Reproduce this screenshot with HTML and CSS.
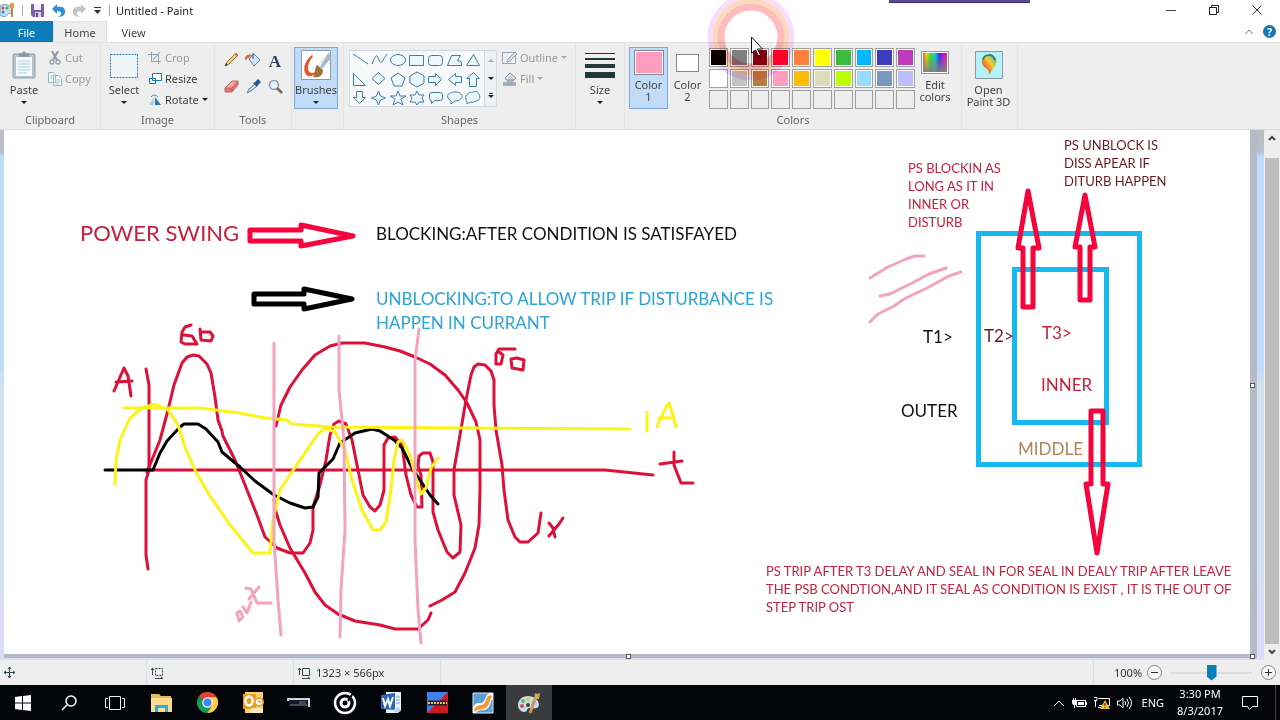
FILE: index.html
```html
<!DOCTYPE html>
<html lang="en">
<head>
  <meta charset="UTF-8">
  <title>Untitled - Paint</title>
  <link rel="stylesheet" href="styles.css">
</head>
<body>

<header class="titlebar">
  <div class="quick">
    <svg class="app-icon" width="17" height="16" viewBox="0 0 17 16"><path d="M0 4C4 1 12 3 12 8c0 4-4 3-5 5-1 2-5 2-7 0z" fill="#c3dff0" stroke="#6f9dbb"/><circle cx="3" cy="6" r="1.5" fill="#e34b3d"/><circle cx="7" cy="6" r="1.5" fill="#55b04a"/><circle cx="3" cy="10" r="1.5" fill="#3f7fd0"/><path d="M12 15V6" stroke="#c9803a" stroke-width="2"/><path d="M10 6V2l1-2 1 2 1-2 1 2v4z" fill="#e09a4d"/></svg>
    <span class="bar"></span>
    <button aria-label="Save"><svg width="13" height="13" viewBox="0 0 13 13"><path d="M0 0h13v13H2l-2-2z" fill="#7a62a8"/><path d="M3 0h7v6H3z" fill="#f3f0fa"/><path d="M4 8h6v5H4z" fill="#d9d2ea"/><path d="M5 9h2v4H5z" fill="#5a4588"/></svg></button>
    <button aria-label="Undo"><svg width="13" height="13" viewBox="0 0 13 13"><path d="M5 0v3c5-1 9 1 8 6-1 3-4 4-7 4 4-2 5-6-1-6v3L0 5z" fill="#2f8fd6"/></svg></button>
    <button aria-label="Redo"><svg width="13" height="13" viewBox="0 0 13 13"><path d="M8 0v3C3 2-1 4 0 9c1 3 4 4 7 4-4-2-5-6 1-6v3l5-5z" fill="#bcc3cb"/></svg></button>
    <button aria-label="Customize Quick Access Toolbar"><svg width="7" height="7" viewBox="0 0 7 7"><path d="M0 0h7v1H0zM0 3h7L3.500 7z" fill="#333"/></svg></button>
    <span class="bar"></span>
  </div>
  <h1>Untitled - Paint</h1>
  <div class="window-buttons">
    <button aria-label="Minimize"><svg width="10" height="10" viewBox="0 0 10 10"><path d="M0 5.500h10" stroke="#444"/></svg></button>
    <button aria-label="Restore"><svg width="10" height="10" viewBox="0 0 10 10" fill="none" stroke="#222"><path d="M.5 2.500h7v7h-7zM2.500 2.500v-2h7v7h-2"/></svg></button>
    <button aria-label="Close"><svg width="10" height="10" viewBox="0 0 10 10"><path d="M.5.5l9 9M9.500.5l-9 9" stroke="#333"/></svg></button>
  </div>
  <span class="call-strip"></span>
</header>

<nav class="tabs">
  <button class="tab file">File</button>
  <button class="tab active">Home</button>
  <button class="tab">View</button>
  <div class="tab-right">
    <button aria-label="Collapse the Ribbon"><svg width="8" height="6" viewBox="0 0 8 6"><path d="M.5 5L4 1l3.500 4" fill="none" stroke="#777"/></svg></button>
    <button class="help" aria-label="Help">?</button>
  </div>
</nav>

<section class="ribbon">
  <div class="group clipboard">
    <div class="group-body">
      <button class="big">
        <svg width="24" height="28" viewBox="0 0 24 28"><rect x="1" y="3" width="22" height="24" rx="1" fill="#b4c2cc" stroke="#93a3b0"/><path d="M4 6h16v19H4z" fill="#f4f9fb"/><path d="M6 10h12M6 13h12M6 16h12M6 19h12M6 22h9" stroke="#a9d0dd"/><path d="M7 2h3l2-2 2 2h3v4H7z" fill="#8c9ba8"/></svg>
        <span>Paste</span><i class="drop"></i>
      </button>
      <div class="stack">
        <button class="small off"><svg width="14" height="14" viewBox="0 0 14 14"><path d="M4 0l5 9M10 0L5 9" stroke="#8d98a3" stroke-width="2"/><circle cx="4" cy="11" r="2" fill="none" stroke="#9aa5af" stroke-width="1.500"/><circle cx="10" cy="11" r="2" fill="none" stroke="#9aa5af" stroke-width="1.500"/></svg>Cut</button>
        <button class="small off"><svg width="14" height="14" viewBox="0 0 14 14" fill="#f5fafc" stroke="#9eb4c2"><path d="M.5.5h5l2 2v8h-7zM5.500 3.500h5l3 3v7h-8z"/><path d="M2 4h3M2 6h2M7 8h5M7 10h5M7 12h4" stroke="#a5cbd9"/></svg>Copy</button>
      </div>
    </div>
    <div class="group-label">Clipboard</div>
  </div>

  <div class="group image">
    <div class="group-body">
      <button class="big">
        <svg width="30" height="28" viewBox="0 0 30 28"><rect x="1.500" y="3.500" width="27" height="23" fill="#eef6fa" stroke="#2b7cab" stroke-dasharray="2 1"/></svg>
        <span>Select</span><i class="drop"></i>
      </button>
      <div class="stack">
        <button class="small off"><svg width="14" height="14" viewBox="0 0 14 14" fill="none" stroke="#91a1b3"><path d="M3.500 1v9.500H13M0 3.500h10.500V13M12 1L5 9"/></svg>Crop</button>
        <button class="small"><svg width="14" height="14" viewBox="0 0 14 14" fill="#fff" stroke="#1979ad"><path d="M4.500 1.500h9v7h-9zM1.500 6.500h6v5h-6z"/></svg>Resize</button>
        <button class="small"><svg width="14" height="14" viewBox="0 0 14 14"><path d="M1 12l5-8v8z" fill="#b9cad8"/><path d="M7 12V4l6 8z" fill="#2279ac"/><path d="M3 4q3-4 7 0" fill="none" stroke="#4e8db5"/></svg>Rotate<i class="drop"></i></button>
      </div>
    </div>
    <div class="group-label">Image</div>
  </div>

  <div class="group tools">
    <div class="group-body tool-grid">
      <button aria-label="Pencil"><svg width="15" height="15" viewBox="0 0 15 15"><path d="M1 14l2-4 9-9 2 2-9 9z" fill="#f6ca78" stroke="#a9793f"/><path d="M1 14l1-3 2 2z" fill="#333"/><path d="M11 1l3 3-1 1-3-3z" fill="#dc7b6c"/></svg></button>
      <button aria-label="Fill with color"><svg width="16" height="15" viewBox="0 0 16 15"><path d="M4 7l5-5 6 6-6 6z" fill="#d6e5f2" stroke="#5c82a8"/><path d="M8 7V1" stroke="#5c82a8" stroke-width="1.500"/><path d="M4 6c2-3 4-2 5-2-2-2-6-2-8 0-2 2-1 4 0 4 1-1 1-2 3-2z" fill="#e8673c"/></svg></button>
      <button aria-label="Text" class="letter">A</button>
      <button aria-label="Eraser"><svg width="15" height="15" viewBox="0 0 15 15"><path d="M1 9l7-7h6l-6 8z" fill="#f3a79d" stroke="#c5695f"/><path d="M1 9h7v4H1zM8 9l6-7v4l-6 7z" fill="#dd7a70" stroke="#c5695f"/></svg></button>
      <button aria-label="Color picker"><svg width="15" height="15" viewBox="0 0 15 15"><path d="M1 14l2-4 6-5 2 2-6 5z" fill="#c8dfef" stroke="#5b7d9a"/><path d="M7 4l4 4 1-2 3-3-3-3-3 3z" fill="#245b8e"/></svg></button>
      <button aria-label="Magnifier"><svg width="15" height="15" viewBox="0 0 15 15"><circle cx="6" cy="6" r="4.500" fill="#e4f1fb" stroke="#8b9bab" stroke-width="1.500"/><path d="M9 9l5 5" stroke="#7d6350" stroke-width="2.500"/></svg></button>
    </div>
    <div class="group-label">Tools</div>
  </div>

  <div class="group brushes">
    <div class="group-body">
      <button class="big selected">
        <svg width="30" height="30" viewBox="0 0 30 30"><path d="M.5.5h29v29H.5z" fill="#fff" stroke="#8d9bab"/><path d="M11 5C-1 14 2 31 13 25c4-2 5-4 4-6-3 5-10 6-10-1 0-5 3-9 5-12z" fill="#e9552a"/><path d="M28 2l2 6-9 11-4-4z" fill="#a9b9c9"/><path d="M28 2L17 15l2 2z" fill="#e8eff5"/><path d="M16 15l6 5c0 7-6 8-10 7 3-3 1-9 4-12z" fill="#a0703f"/></svg>
        <span>Brushes</span><i class="drop"></i>
      </button>
    </div>
  </div>

  <div class="group shapes">
    <div class="group-body">
      <div class="gallery">
        <svg width="134" height="56" viewBox="0 0 134 56" fill="#edf8fc" stroke="#3f7fa3">
          <path d="M3 3l15 10" fill="none"/><path d="M22 13c4-10 5-10 7-4s3 1 8-6" fill="none"/><ellipse cx="48" cy="9" rx="7.500" ry="5.500"/><path d="M59.500 4.500h14v10h-14z"/><rect x="78.500" y="4.500" width="14" height="10" rx="3"/><path d="M97.500 14.500l4-10h9l-3 5 4 1v4z"/><path d="M123.500 3.500l6 11h-13z"/>
          <path d="M3.500 22.500v12h12z"/><path d="M28.500 21.500l6.500 6-6.500 6-6.500-6z"/><path d="M48 22l7 5-3 8h-8l-3-8z"/><path d="M67 21l7 4v7l-7 4-7-4v-7z"/><path d="M78.500 25.500h7v-3l6 6-6 6v-3h-7z"/><path d="M111.500 25.500h-6v-3l-7 6 7 6v-3h6z"/><path d="M123.500 21.500l6 6h-3v8h-7v-8h-3z"/>
          <path d="M6.500 40.500h6v6h3l-6 6-6-6h3z"/><path d="M28.500 40l2 5 5 2-5 2-2 5-2-5-5-2 5-2z"/><path d="M48 40l2 5h6l-5 3 2 6-5-3-5 3 2-6-5-3h6z"/><path d="M67 40l2 4h5l-2 3 2 4h-5l-2 3-2-3h-5l2-4-2-3h5z"/><path d="M81.500 41.500h9q2 0 2 2v4q0 2-2 2h-6l-3 3v-3q-2 0-2-2v-4q0-2 2-2z"/><path d="M101 50c-8-6 0-9 4-9 10 0 9 9 0 9l-4 3z"/><path d="M118 43c1-3 4-1 5-2 4-2 6 1 6 3 2 2 0 6-3 6-3 2-5 1-6 1l-3 2c1-3-2-3-1-5-1-2 0-4 2-5z"/>
        </svg>
        <div class="gallery-scroll">
          <button aria-label="Scroll shapes up"><i class="drop up"></i></button>
          <button aria-label="Scroll shapes down"><i class="drop"></i></button>
          <button aria-label="More shapes"><i class="drop more"></i></button>
        </div>
      </div>
      <div class="stack">
        <button class="small off"><svg width="15" height="14" viewBox="0 0 15 14" fill="#eef2f5" stroke="#98a6b8"><path d="M.5 1.500h13v11H.5z"/><path d="M5 11l1-3 7-7 2 2-7 7z" fill="#d4dae2"/></svg>Outline<i class="drop"></i></button>
        <button class="small off"><svg width="15" height="14" viewBox="0 0 15 14"><path d="M1 10h13v4H1z" fill="#a7adb6"/><path d="M3 6l5-5 6 5-6 6z" fill="#d8dfe8" stroke="#8496aa"/><path d="M3 7h10l-5 4z" fill="#9eb0c5"/></svg>Fill<i class="drop"></i></button>
      </div>
    </div>
    <div class="group-label">Shapes</div>
  </div>

  <div class="group size">
    <div class="group-body">
      <button class="big">
        <svg width="30" height="28" viewBox="0 0 30 28" fill="#1f3b3b"><path d="M0 2h30v1H0zM0 7h30v2H0zM0 13h30v4H0zM0 21h30v6H0z"/></svg>
        <span>Size</span><i class="drop"></i>
      </button>
    </div>
  </div>

  <div class="group colors">
    <div class="group-body">
      <button class="big selected color-slot"><i class="chip pink"></i><span>Color<br>1</span></button>
      <button class="big color-slot"><i class="chip white"></i><span>Color<br>2</span></button>
      <div class="palette">
        <button aria-label="Black"></button><button aria-label="Gray-50%"></button><button aria-label="Dark red"></button><button aria-label="Red"></button><button aria-label="Orange"></button><button aria-label="Yellow"></button><button aria-label="Green"></button><button aria-label="Turquoise"></button><button aria-label="Indigo"></button><button aria-label="Purple"></button>
        <button aria-label="White"></button><button aria-label="Gray-25%"></button><button aria-label="Brown"></button><button aria-label="Rose"></button><button aria-label="Gold"></button><button aria-label="Light yellow"></button><button aria-label="Lime"></button><button aria-label="Light turquoise"></button><button aria-label="Blue-gray"></button><button aria-label="Lavender"></button>
        <button disabled></button><button disabled></button><button disabled></button><button disabled></button><button disabled></button><button disabled></button><button disabled></button><button disabled></button><button disabled></button><button disabled></button>
      </div>
      <button class="big edit"><i class="spectrum"></i><span>Edit<br>colors</span></button>
    </div>
    <div class="group-label">Colors</div>
  </div>

  <div class="group paint3d">
    <div class="group-body">
      <button class="big">
        <svg width="28" height="28" viewBox="0 0 28 28">
          <defs><linearGradient id="drop3d" x1="0" y1="1" x2="1" y2="0"><stop offset="0" stop-color="#b03aa5"/><stop offset=".3" stop-color="#ea6a2e"/><stop offset=".6" stop-color="#f7cd31"/><stop offset="1" stop-color="#23a8b5"/></linearGradient></defs>
          <path d="M.5.5h27v27H.5z" fill="#b5f3f8" stroke="#8c98a5"/><path d="M14 4c6 0 9 5 7 9-1 4-5 5-6 11-1-2-1-4-3-6-3-2-5-4-5-7 0-4 3-7 7-7z" fill="url(#drop3d)"/><path d="M8 9c1-6 10-7 12 0" fill="none" stroke="#27867e" stroke-width="2"/></svg>
        <span>Open<br>Paint 3D</span>
      </button>
    </div>
  </div>
</section>

<main class="workspace">
  <div class="sheet">
    <svg class="drawing" viewBox="4 130 1246 524">
      <!-- captions -->
      <g class="note">
        <text class="t-title crimson" x="80" y="241">POWER SWING</text>
        <text class="t-mid" x="376" y="240">BLOCKING:AFTER CONDITION IS SATISFAYED</text>
        <text class="t-mid blue"><tspan x="376" y="305">UNBLOCKING:TO ALLOW TRIP IF DISTURBANCE IS</tspan><tspan x="376" y="329">HAPPEN IN CURRANT</tspan></text>
        <text class="t-small crimson"><tspan x="908" y="173">PS BLOCKIN AS</tspan><tspan x="908" y="191">LONG AS IT IN</tspan><tspan x="908" y="209">INNER OR</tspan><tspan x="908" y="227">DISTURB</tspan></text>
        <text class="t-small maroon"><tspan x="1064" y="150">PS UNBLOCK IS</tspan><tspan x="1064" y="168">DISS APEAR IF</tspan><tspan x="1064" y="186">DITURB HAPPEN</tspan></text>
        <text class="t-small crimson"><tspan x="766" y="576">PS TRIP AFTER T3 DELAY AND SEAL IN FOR SEAL IN DEALY TRIP AFTER LEAVE</tspan><tspan x="766" y="594">THE PSB CONDTION,AND IT SEAL AS CONDITION IS EXIST , IT IS THE OUT OF</tspan><tspan x="766" y="612">STEP TRIP OST</tspan></text>
      </g>

      <!-- zones -->
      <g class="zone">
        <path d="M978.500 233.500h161v231h-161z"/>
        <path d="M1014.500 269.500h92v153h-92z"/>
      </g>
      <g class="note">
        <text class="t-mid" x="923" y="343">T1&gt;</text>
        <text class="t-mid maroon" x="984" y="342">T2&gt;</text>
        <text class="t-mid crimson" x="1042" y="339">T3&gt;</text>
        <text class="t-mid crimson" x="1041" y="391">INNER</text>
        <text class="t-mid" x="901" y="417">OUTER</text>
        <text class="t-mid tan" x="1018" y="455">MIDDLE</text>
      </g>

      <!-- block arrows -->
      <g class="arrow">
        <path d="M250 230h51v-5l52 11-52 10v-5h-51z"/>
        <path d="M1023 307v-59h-5l10-57 11 57h-6v59z"/>
        <path d="M1080 300v-53h-5l10-52 10 52h-5v53z"/>
        <path d="M1091 411h12v73h5l-11 69-11-69h5z"/>
        <path class="black" d="M254 294h50v-5l48 10-48 10v-5h-50z"/>
      </g>

      <!-- freehand curves -->
      <g class="pen red">
        <path d="M146 369l3 16v85l-3 10v75l2 14"/>
        <path d="M146 470h459l48 5"/>
        <path d="M114 391l10-23 4 8 3 20M116 382l16-1"/>
        <path d="M191 325l-6 2-3 5-1 10 4 2h12l-5-8-8-1M200 329l1 11 10 1 2-5-3-4-8 0"/>
        <path d="M147 472L160 440 168 410 174 385 182 363 187 357 193 355 199 356 207 364 211 373 215 397 218 420 222 431 223 436 235 460 245 485 257 515 265 537 277 548 290 553 303 553 310 543 313 530 313 507 320 485 326 460 330 435 334 424 339 421 346 424 352 440 357 465 363 495 370 507 375 511 380 505 384 490 384 445 388 438 395 437 402 445 406 475 411 495 417 507 422 507 421 475 418 466 419 456 423 453 430 453 433 462 433 512 438 530 447 552 453 558 460 552 461 525 454 495 454 470 460 435 466 400 471 375 474 367 478 364 485 365 491 371 494 380 494 405 496 430 502 465 504 490 508 520 515 537 520 542 528 542 538 533 541 513"/>
        <path d="M276 426L281 405 290 387 302 370 315 355 330 346 342 343 365 343 385 347 400 351 415 357 430 364 445 375 458 390 467 403 476 422 480 440 480 490 479 525 475 548 465 573 455 592 442 600 430 606"/>
        <path d="M431 613L428 620 418 629 395 629 380 625 355 621 338 614 325 605 315 592 305 573 290 548 280 525 276 512 274 500"/>
        <path d="M515 349h-16l-3 5v10h5l2-9-4-3M511 359l1 9 11 2 1-10-7-2z"/>
        <path d="M549 523l4 5 2 9M563 518l-4 6-10 12"/>
        <path d="M660 464l22-3M674 452l0 13 7 18h12"/>
      </g>
      <g class="pen black">
        <path d="M105 470H153L160 453 167 441 180 427 184 424 198 424 206 429 218 442 222 452 240 467 255 481 274 495 290 503 305 508 313 507 318 497 319 473 326 466 333 459 340 443 355 433 372 429 380 431 394 440 402 448 413 470 422 483 430 495 438 504"/>
      </g>
      <g class="pen yellow">
        <path d="M124 408L200 408 240 413 265 418 287 420 291 424 330 427 470 428 630 429"/>
        <path d="M115 484L116 460 120 440 130 418 142 408 155 404 168 410 178 425 186 450 196 472 210 496 230 525 253 553 270 553 273 520 280 490 300 460 318 434 325 428 335 432 345 450 352 480 362 510 373 530 380 530 386 522 391 490 394 460 398 442 402 440 410 455 415 475 421 494 426 488 431 468 438 458"/>
        <path d="M647 412v19M657 427l9-20 3-4 3 9 4 15M659 418h15"/>
      </g>
      <g class="pen pink">
        <path d="M274 343V540L278 600 281 635"/>
        <path d="M339 336V390L344 440 345 530 341 590 340 637"/>
        <path d="M419 329L415 360V540L418 610 421 643"/>
        <path d="M246 588l5 1 6 14h14M259 587l-10 12M243 607l4 6 4-11M237 613l3-2 3 6-4 4-2-8"/>
        <path d="M870 278l18-11 18-8 9-3 9 0M880 296l10-2 22-11 17-9 17-6M870 322l8-8 16-8 10-7 25-12 20-11 12-4"/>
      </g>
    </svg>
    <i class="handle right"></i>
    <i class="handle bottom"></i>
    <i class="handle corner"></i>
  </div>
  <div class="scrollbar">
    <button aria-label="Scroll up"><svg width="8" height="6" viewBox="0 0 8 6"><path d="M1 5l3-3 3 3" fill="none" stroke="#444" stroke-width="2"/></svg></button>
    <div class="thumb"></div>
    <button aria-label="Scroll down"><svg width="8" height="6" viewBox="0 0 8 6"><path d="M1 1l3 3 3-3" fill="none" stroke="#444" stroke-width="2"/></svg></button>
  </div>
</main>

<footer class="status">
  <div class="cell"><svg width="11" height="11" viewBox="0 0 11 11" fill="none" stroke="#35484f"><path d="M5.500 0v11M0 5.500h11M4 2l1.500-2L7 2M4 9l1.500 2L7 9M2 4L0 5.500 2 7M9 4l2 1.500L9 7"/></svg></div>
  <div class="cell"><svg width="13" height="12" viewBox="0 0 13 12" fill="none" stroke="#35484f"><path d="M1.500 8V1M0 3l1.500-2L3 3M4 11.500h8M10 10l2 1.500"/><path d="M4.500 1.500h7v7h-7z" stroke-dasharray="2 1"/></svg></div>
  <div class="cell"><svg width="13" height="12" viewBox="0 0 13 12" fill="none" stroke="#35484f"><path d="M1.500 8V1M0 3l1.500-2L3 3M4 11.500h8M10 10l2 1.500M4.500 1.500h7v7h-7z"/></svg>1323 × 566px</div>
  <div class="zoom">
    <label for="zoom">100%</label>
    <button aria-label="Zoom out"><svg width="15" height="15" viewBox="0 0 15 15"><circle cx="7.500" cy="7.500" r="7" fill="#f8f8f8" stroke="#888"/><path d="M4 7.500h7" stroke="#333"/></svg></button>
    <input type="range" id="zoom" min="0" max="100" value="50">
    <button aria-label="Zoom in"><svg width="15" height="15" viewBox="0 0 15 15"><circle cx="7.500" cy="7.500" r="7" fill="#f8f8f8" stroke="#888"/><path d="M4 7.500h7M7.500 4v7" stroke="#333"/></svg></button>
  </div>
</footer>

<div class="taskbar">
  <button aria-label="Start"><svg width="16" height="16" viewBox="0 0 16 16" fill="#fff"><path d="M0 2l7-1v6.500H0zM8 1l8-1v7.500H8zM0 8.500h7V15l-7-1zM8 8.500h8V16l-8-1z"/></svg></button>
  <button aria-label="Search"><svg width="16" height="16" viewBox="0 0 16 16" fill="none" stroke="#fff" stroke-width="1.500"><circle cx="10" cy="6" r="5"/><path d="M6 10l-5 5"/></svg></button>
  <button aria-label="Task View"><svg width="20" height="16" viewBox="0 0 20 16" fill="none" stroke="#eee"><path d="M4.500 1.500h11v13h-11zM3 3.500H.5v9H3M17 3.500h2.500v9H17"/></svg></button>
  <button aria-label="File Explorer"><svg width="21" height="18" viewBox="0 0 21 18"><path d="M0 0h8l2 2h10v15H0z" fill="#e7ba58"/><path d="M0 4h21v14H0z" fill="#fbdc8b"/><path d="M4 18v-7h13v7h-3v-4H7v4z" fill="#35a9de"/></svg></button>
  <button aria-label="Chrome"><svg width="21" height="21" viewBox="0 0 20 20"><path d="M10 10L1.300 5A10 10 0 0 1 18.700 5z" fill="#db4437"/><path d="M10 10L1.300 5A10 10 0 0 0 10 20l4.300-7.500z" fill="#0f9d58"/><path d="M10 10l4.300 2.500L10 20A10 10 0 0 0 18.700 5H10z" fill="#ffcd40"/><circle cx="10" cy="10" r="5" fill="#f4f4f4"/><circle cx="10" cy="10" r="3.800" fill="#4285f4"/></svg></button>
  <button aria-label="Outlook"><svg width="21" height="21" viewBox="0 0 21 21"><path d="M2 0h18v21H2z" fill="#f9d27a"/><path d="M0 2h13v15H0z" fill="#eaa01f"/><ellipse cx="6" cy="9" rx="3.500" ry="4.500" fill="none" stroke="#fff" stroke-width="2.500"/><circle cx="16" cy="10" r="4" fill="#fff" stroke="#e8a83b" stroke-width="2"/><path d="M16 8v2h2" stroke="#b77b1a" fill="none"/><path d="M8 16h12v5H8z" fill="#fbe7b7"/></svg></button>
  <button aria-label="Device"><svg width="24" height="11" viewBox="0 0 24 11"><path d="M0 1h23v9h-2V4H0z" fill="#d5d3da"/><path d="M2 3h19v6H2z" fill="#1a1a26"/><path d="M12 4h7v3h-7z" fill="#44446a"/><path d="M3 8h17" stroke="#77778a"/></svg></button>
  <button aria-label="Groove"><svg width="24" height="24" viewBox="0 0 24 24"><circle cx="12" cy="12" r="10" fill="none" stroke="#fff" stroke-width="2.500"/><circle cx="12" cy="12" r="4" fill="none" stroke="#fff" stroke-width="3"/><path d="M15 10l5-8" stroke="#000" stroke-width="2"/></svg></button>
  <button aria-label="Word"><svg width="21" height="21" viewBox="0 0 21 21"><path d="M5 0h15v18l-3 3H5z" fill="#e9f1fb"/><path d="M15 5h4M15 8h4M15 11h4" stroke="#7aa3dd"/><path d="M0 3l14-2v17L0 17z" fill="#2b63b5"/><path d="M2 6l2 8 3-7 2 7 3-9" fill="none" stroke="#fff" stroke-width="2"/><path d="M12 18l6-3 2 4-5 2z" fill="#b8d2f0"/></svg></button>
  <button aria-label="Converter"><svg width="21" height="21" viewBox="0 0 21 21"><path d="M0 0h21v21H0z" fill="#3f80ea"/><path d="M21 0v21H0z" fill="#cf1a1f"/><path d="M1 11h19" stroke="#211f2a" stroke-width="5"/><path d="M1 11h19" stroke="#e6c458" stroke-width="2" stroke-dasharray="2 1"/></svg></button>
  <button aria-label="Editor"><svg width="22" height="22" viewBox="0 0 22 22"><path d="M1 1h20v20H1z" fill="#5d9fd8" stroke="#dcecf8"/><path d="M1 16c4-9 8-2 11-7 3-4 1-6 6-8h3v6c-3 2-2 6-5 9-4 4-9 0-12 5H1z" fill="#fff"/><path d="M2 18c4-8 8-2 11-8 2-4 2-6 5-7l2 2c-3 3-2 7-5 10-4 4-8 0-12 5z" fill="#f39a2d"/></svg></button>
  <button class="running" aria-label="Paint"><svg width="23" height="22" viewBox="0 0 23 22"><path d="M10 4C4 4 0 8 0 13c0 4 3 7 6 7 4 0 2-3 5-4 4 0 9 2 10-3 0-5-5-9-11-9z" fill="#c2deef"/><circle cx="5" cy="9" r="2" fill="#6bb660"/><circle cx="10" cy="7" r="2" fill="#e8c545"/><circle cx="4" cy="14" r="2" fill="#dd4a3f"/><circle cx="10" cy="13" r="2" fill="#3d4450"/><path d="M12 21l5-14" stroke="#d6934d" stroke-width="3"/><path d="M16 7l1-6 2 1 3-1-1 6z" fill="#d9a25f"/></svg></button>
  <div class="tray">
    <button aria-label="Show hidden icons"><svg width="12" height="8" viewBox="0 0 12 8"><path d="M1 7l5-5 5 5" fill="none" stroke="#fff"/></svg></button>
    <button aria-label="Battery"><svg width="15" height="12" viewBox="0 0 15 12"><path d="M4.500 3.500h9v6h-9z" fill="none" stroke="#fff"/><path d="M6 5h6v3H6zM14 5h1v3h-1zM0 3h5v3L4 8H1L0 6zM1 1h1v2H1zM3 1h1v2H3zM2 8h1v3H2z" fill="#fff"/></svg></button>
    <button aria-label="Network"><svg width="16" height="14" viewBox="0 0 16 14"><path d="M4.500 2.500h11v7H5M0 1.500h3v3H0M1.500 5v6M4 11.500h5" fill="none" stroke="#fff"/><path d="M11 4l5 9H6z" fill="#f2bd35"/><path d="M11 7v3M11 11v1" stroke="#222"/></svg></button>
    <button aria-label="Volume"><svg width="16" height="14" viewBox="0 0 16 14" fill="none" stroke="#fff"><path d="M.5 5v4H3l3 3V2L3 5zM8 5q1.500 2 0 4M10 3q3 4 0 8M12 1q5 6 0 12"/></svg></button>
    <button class="lang">ENG</button>
    <button class="clock">3:30 PM<br>8/3/2017</button>
    <button class="notify" aria-label="Action Center"><svg width="16" height="16" viewBox="0 0 16 16"><path d="M.5 1.500h15v10h-5l-3 3-2-3h-5z" fill="none" stroke="#fff"/></svg></button>
    <span class="peek"></span>
  </div>
</div>

<svg class="pointer halo" width="88" height="88" viewBox="0 0 88 88" fill="none">
  <circle cx="44" cy="44" r="41" stroke="#f8dcfc" stroke-width="5"/><circle cx="44" cy="44" r="36" stroke="#ffd9bb" stroke-width="5"/><circle cx="44" cy="44" r="30" stroke="#ffbcbc" stroke-width="7"/>
</svg>
<svg class="pointer" width="88" height="88" viewBox="0 0 88 88">
  <path d="M44.500 44v16l4-3 3 6 2-1-3-6h5z" fill="#fff" stroke="#111"/>
</svg>

</body>
</html>
```
FILE: styles.css
```css
* { box-sizing: border-box; }
body {
  margin: 0;
  height: 100vh;
  display: flex;
  flex-direction: column;
  position: relative;
  overflow: hidden;
  font-family: "Noto Sans", sans-serif;
  font-size: 11px;
  color: #444;
  background: #fff;
}
button {
  font: inherit;
  color: inherit;
  background: none;
  border: none;
  padding: 0;
  display: flex;
  align-items: center;
  justify-content: center;
}
svg { display: block; flex: none; }

/* title bar */
.titlebar {
  height: 21px;
  display: flex;
  align-items: center;
  padding-bottom: 1px;
  position: relative;
}
.quick { display: flex; align-items: center; gap: 8px; }
.quick .app-icon { margin-right: -3px; }
.bar { width: 1px; height: 11px; background: #aaa; }
.titlebar h1 {
  margin: 0 0 0 6px;
  font-size: 11px;
  font-weight: normal;
  color: #222;
}
.window-buttons { margin-left: auto; margin-right: 2px; display: flex; height: 18px; }
.window-buttons button { width: 43px; }
.call-strip {
  position: absolute;
  top: 0;
  right: 250px;
  width: 141px;
  height: 3px;
  background: #5c4a94;
  border-bottom: 1px solid #3c2c70;
}

/* tabs */
.tabs { display: flex; height: 21px; }
.tab { width: 53px; border: 1px solid transparent; border-bottom: none; }
.tab.active { background: #eee; border-color: #e2e2e2; width: 54px; }
.tab.file { background: #0d7dba; color: #fff; border-color: #0d7dba; }
.tab-right {
  margin-left: auto;
  display: flex;
  align-items: center;
  gap: 10px;
  padding-right: 4px;
}
.help {
  width: 13px;
  height: 13px;
  border-radius: 50%;
  background: #1377b0;
  color: #fff;
  font-weight: bold;
}

/* ribbon */
.ribbon {
  display: flex;
  height: 88px;
  background: #eee;
  border-top: 1px solid #e4e4e4;
  border-bottom: 1px solid #d8dae0;
}
.group {
  display: flex;
  flex-direction: column;
  border-right: 1px solid #e2e4e8;
  padding: 4px 0 1px;
}
.group-body { display: flex; flex: 1; align-items: flex-start; }
.group-label { text-align: center; line-height: 16px; color: #666; }
.clipboard { width: 101px; }
.image { width: 114px; }
.tools { width: 77px; }
.brushes { width: 52px; }
.shapes { width: 232px; }
.size { width: 49px; }
.colors { width: 337px; }
.paint3d { width: 56px; }
.clipboard .group-body, .shapes .group-body { padding-left: 5px; }
.image .group-body, .colors .group-body { padding-left: 4px; }
.brushes .group-body { padding-left: 2px; }
.big {
  width: 38px;
  flex-direction: column;
  justify-content: flex-start;
  padding-top: 2px;
  line-height: 12px;
  border: 1px solid transparent;
  height: 62px;
}
.big svg { height: 30px; }
.big span { margin: 4px -6px 5px; white-space: nowrap; }
.brushes .big { width: 44px; }
.size .big { width: 48px; }
.paint3d .big { width: 53px; }
.big.selected { background: #c2dcf8; border-color: #7ea9dc; }
.stack { display: flex; flex-direction: column; padding-left: 5px; }
.small {
  height: 21px;
  justify-content: flex-start;
  gap: 3px;
}
.off { color: #999; }
.drop {
  border: 3px solid transparent;
  border-top-color: #222;
  border-bottom: none;
  width: 0;
  height: 0;
}
.off .drop { border-top-color: #aaa; }
.drop.up { border-top: none; border-bottom: 3px solid #aaa; }
.drop.more { box-shadow: 0 -3px 0 -1px #444; }
.tool-grid {
  display: grid;
  grid-template-columns: repeat(3, 22px);
  grid-auto-rows: 27px;
  justify-content: center;
  align-content: start;
  padding-top: 5px;
}
.letter { font: bold 17px "Liberation Serif", serif; color: #26465f; }
.gallery {
  display: flex;
  width: 148px;
  height: 57px;
  margin-top: 3px;
  background: #f6f8fa;
  border: 1px solid #d5dae2;
}
.gallery-scroll {
  flex: 1;
  display: grid;
  grid-template-rows: repeat(3, 1fr);
  background: #eef1f4;
  border-left: 1px solid #d5dae2;
}
.color-slot { width: 39px; }
.chip { width: 30px; height: 30px; border: 1px solid #888; box-shadow: inset 0 0 0 1px #fff; }
.chip.pink { background: #ff9dc0; }
.chip.white { background: #fff; width: 23px; height: 23px; margin: 4px 0 3px; }
.palette {
  flex: 1;
  display: grid;
  grid-template-columns: repeat(10, 1fr);
  grid-auto-rows: 19px;
  gap: 2px;
  margin: 1px 0 0 2px;
}
.palette button { border: 1px solid #a0a0a0; box-shadow: inset 0 0 0 1px #fff; }
.palette button:disabled { box-shadow: none; }
.palette button:nth-child(1) { background: #0a0000; }
.palette button:nth-child(2) { background: #7f7f7f; }
.palette button:nth-child(3) { background: #880010; }
.palette button:nth-child(4) { background: #ff0030; }
.palette button:nth-child(5) { background: #ff7f3c; }
.palette button:nth-child(6) { background: #ffff00; }
.palette button:nth-child(7) { background: #3cbc3c; }
.palette button:nth-child(8) { background: #00b8ff; }
.palette button:nth-child(9) { background: #3c3cbf; }
.palette button:nth-child(10) { background: #bc3cbc; }
.palette button:nth-child(11) { background: #ffffff; }
.palette button:nth-child(12) { background: #c3c3c3; }
.palette button:nth-child(13) { background: #bc7c40; }
.palette button:nth-child(14) { background: #ff9dc0; }
.palette button:nth-child(15) { background: #ffbc00; }
.palette button:nth-child(16) { background: #dcdcb8; }
.palette button:nth-child(17) { background: #bcff00; }
.palette button:nth-child(18) { background: #98dcff; }
.palette button:nth-child(19) { background: #7898bf; }
.palette button:nth-child(20) { background: #bcbcff; }
.edit { width: 40px; margin-right: 6px; }
.spectrum {
  width: 28px;
  height: 28px;
  margin: 1px;
  border: 1px solid #8c98a5;
  box-shadow: inset 0 0 0 1px #fff;
  background: linear-gradient(transparent, #808080), linear-gradient(90deg, #f33, #fd0, #2e2, #0dd, #22f, #d0d, #f24);
}

/* drawing area */
.workspace {
  flex: 1;
  min-height: 0;
  display: flex;
  background: linear-gradient(#b9bec6 4%, #bfdcfc 5%, #bfdcfc 45%, #d3e1f3 48%, #d3e1f3 85%, #dcdcfa 90%);
}
.sheet {
  flex: 1;
  position: relative;
  margin: 0 7px 2px 4px;
  padding: 0 7px 4px 0;
  background: #b4bac6;
}
.drawing { width: 100%; height: 100%; background: #fff; }
.handle {
  position: absolute;
  width: 5px;
  height: 5px;
  background: #fff;
  border: 1px solid #555;
}
.handle.right { right: 2px; top: 48%; }
.handle.bottom { left: 50%; bottom: -1px; margin-left: -5px; }
.handle.corner { right: 2px; bottom: -1px; }
.scrollbar {
  width: 16px;
  display: flex;
  flex-direction: column;
  background: #eee;
}
.scrollbar button { height: 16px; }
.thumb { flex: 1; margin: 12px 1px 0; background: #bdbdbd; }
.note { font-family: Lato, "Noto Sans", sans-serif; fill: #111; }
.t-title { font-size: 22px; }
.t-mid { font-size: 17px; }
.t-small { font-size: 13px; }
.note .crimson { fill: #c8203e; }
.note .maroon { fill: #6b1a20; }
.note .blue { fill: #28a4d6; }
.note .tan { fill: #b08458; }
.zone { fill: none; stroke: #16b8f0; stroke-width: 5px; }
.arrow { fill: none; stroke: #f5053c; stroke-width: 5px; stroke-linejoin: round; }
.arrow .black { stroke: #000; }
.pen { fill: none; stroke-width: 3px; stroke-linejoin: round; stroke-linecap: round; }
.pen.red { stroke: #dc1038; }
.pen.black { stroke: #000; }
.pen.yellow { stroke: #fcf418; }
.pen.pink { stroke: #f2a4bf; }

/* status bar */
.status {
  display: flex;
  height: 25px;
  background: #eee;
  color: #333;
}
.status .cell {
  width: 147px;
  display: flex;
  align-items: center;
  gap: 5px;
  padding-left: 4px;
  border-right: 1px solid #dcdfe4;
}
.zoom {
  margin-left: auto;
  width: 187px;
  display: flex;
  align-items: center;
  gap: 5px;
  padding: 0 4px 0 20px;
  border-left: 1px solid #dcdfe4;
}
.zoom input {
  flex: 1;
  min-width: 0;
  margin: 0 4px;
  height: 16px;
  appearance: none;
  background: linear-gradient(#ddd, #ddd) center / 100% 2px no-repeat;
}
.zoom input::-webkit-slider-thumb {
  appearance: none;
  width: 10px;
  height: 16px;
  background: #0d7dba;
  clip-path: polygon(0 0, 100% 0, 100% 75%, 50% 100%, 0 75%);
}

/* taskbar */
.taskbar {
  display: flex;
  height: 35px;
  background: #030508;
  color: #fff;
}
.taskbar > button { width: 46px; }
.taskbar .running { background: #3a3b3c; }
.tray { margin-left: auto; display: flex; align-items: stretch; gap: 7px; }
.tray .lang { padding: 0 2px; }
.tray .clock { line-height: 17px; padding: 0 2px 1px 4px; }
.tray .notify { padding: 0 10px; }
.peek { width: 5px; border-left: 1px solid #444; }

/* mouse pointer with its click highlight */
.pointer {
  position: absolute;
  left: 707px;
  top: -7px;
  pointer-events: none;
}
.halo { mix-blend-mode: multiply; }
```
